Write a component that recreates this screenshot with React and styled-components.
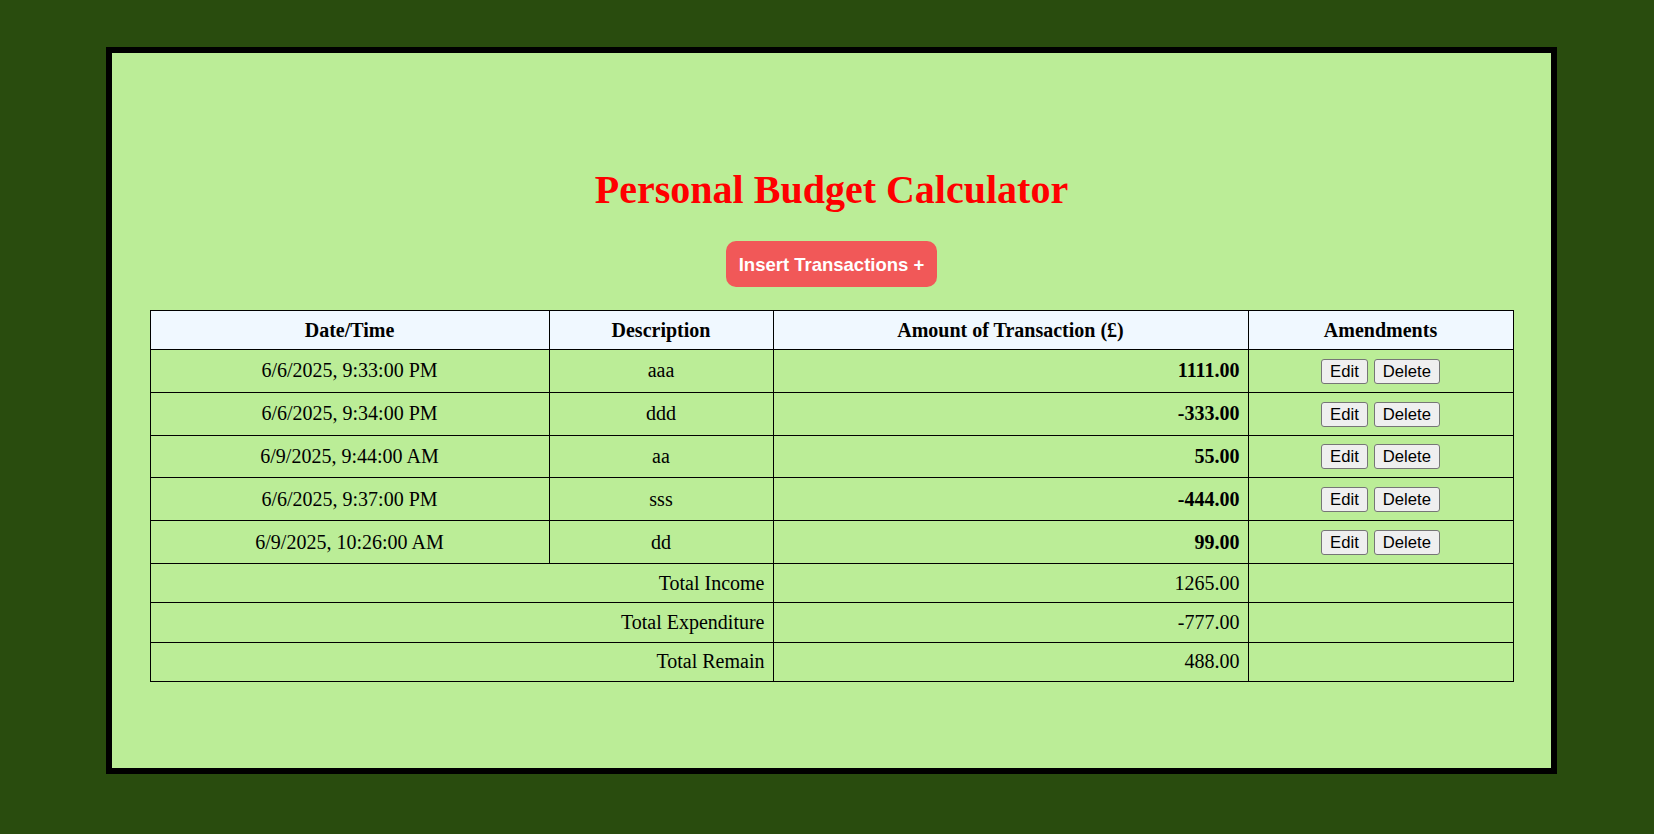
import React from "react";
import styled, { createGlobalStyle } from "styled-components";

const GlobalStyle = createGlobalStyle`
  body {
    margin: 0;
    background-color: #294c0e;
    font-family: "Liberation Serif", "Times New Roman", serif;
  }
`;

const Page = styled.div`
  padding: 47px 97px 62px 106px;
`;

const Frame = styled.div`
  border: 6px solid #000;
  background-color: #bbed97;
  padding: 114px 38px 86px 38px;
  display: flex;
  flex-direction: column;
  align-items: center;
`;

const Title = styled.h1`
  margin: 0;
  color: #ff0000;
  font-size: 40px;
  line-height: 46px;
  font-weight: 700;
  text-align: center;
`;

const InsertButton = styled.button`
  margin-top: 28px;
  background-color: #f15858;
  color: #fff;
  border: none;
  border-radius: 10px;
  font-family: "Liberation Sans", Arial, sans-serif;
  font-weight: 700;
  font-size: 18.5px;
  line-height: 21px;
  padding: 13px 13px 12px;
  cursor: pointer;
`;

const Table = styled.table`
  margin-top: 23px;
  width: 100%;
  border-collapse: collapse;
  table-layout: fixed;
  font-size: 20px;
  color: #000;
`;

const Th = styled.th`
  background-color: #f0f8ff;
  border: 1px solid #000;
  padding: 7.5px 8px;
  line-height: 23px;
  font-weight: 700;
  text-align: center;
`;

const Td = styled.td`
  border: 1px solid #000;
  padding: 7.5px 8px;
  line-height: 23px;
  height: ${(p) => (p.$tall ? "26.8px" : "23.3px")};
  text-align: ${(p) => p.$align || "center"};
  font-weight: ${(p) => (p.$bold ? 700 : 400)};
`;

const SmallButton = styled.button`
  font-family: "Liberation Sans", Arial, sans-serif;
  font-size: 16.67px;
  line-height: 19px;
  padding: 2px 8.2px;
  margin: 0 2.8px;
  background-color: #efefef;
  color: #000;
  border: 1px solid #767676;
  border-radius: 3px;
  vertical-align: middle;
  cursor: pointer;
`;

const transactions = [
  { id: 1, date: "6/6/2025, 9:33:00 PM", desc: "aaa", amount: 1111 },
  { id: 2, date: "6/6/2025, 9:34:00 PM", desc: "ddd", amount: -333 },
  { id: 3, date: "6/9/2025, 9:44:00 AM", desc: "aa", amount: 55 },
  { id: 4, date: "6/6/2025, 9:37:00 PM", desc: "sss", amount: -444 },
  { id: 5, date: "6/9/2025, 10:26:00 AM", desc: "dd", amount: 99 },
];

const App = () => {
  const income = transactions
    .filter((t) => t.amount > 0)
    .reduce((s, t) => s + t.amount, 0);
  const expenditure = transactions
    .filter((t) => t.amount < 0)
    .reduce((s, t) => s + t.amount, 0);

  const totals = [
    ["Total Income", income],
    ["Total Expenditure", expenditure],
    ["Total Remain", income + expenditure],
  ];

  return (
    <Page>
      <GlobalStyle />
      <Frame>
        <Title>Personal Budget Calculator</Title>
        <InsertButton>Insert Transactions +</InsertButton>
        <Table>
          <colgroup>
            <col style={{ width: "399px" }} />
            <col style={{ width: "224px" }} />
            <col style={{ width: "475px" }} />
            <col style={{ width: "265px" }} />
          </colgroup>
          <thead>
            <tr>
              <Th>Date/Time</Th>
              <Th>Description</Th>
              <Th>Amount of Transaction (£)</Th>
              <Th>Amendments</Th>
            </tr>
          </thead>
          <tbody>
            {transactions.map((t) => (
              <tr key={t.id}>
                <Td $tall>{t.date}</Td>
                <Td>{t.desc}</Td>
                <Td $align="right" $bold>
                  {t.amount.toFixed(2)}
                </Td>
                <Td>
                  <SmallButton>Edit</SmallButton>
                  <SmallButton>Delete</SmallButton>
                </Td>
              </tr>
            ))}
            {totals.map(([label, value]) => (
              <tr key={label}>
                <Td colSpan={2} $align="right">
                  {label}
                </Td>
                <Td $align="right">{value.toFixed(2)}</Td>
                <Td />
              </tr>
            ))}
          </tbody>
        </Table>
      </Frame>
    </Page>
  );
};

export default App;
